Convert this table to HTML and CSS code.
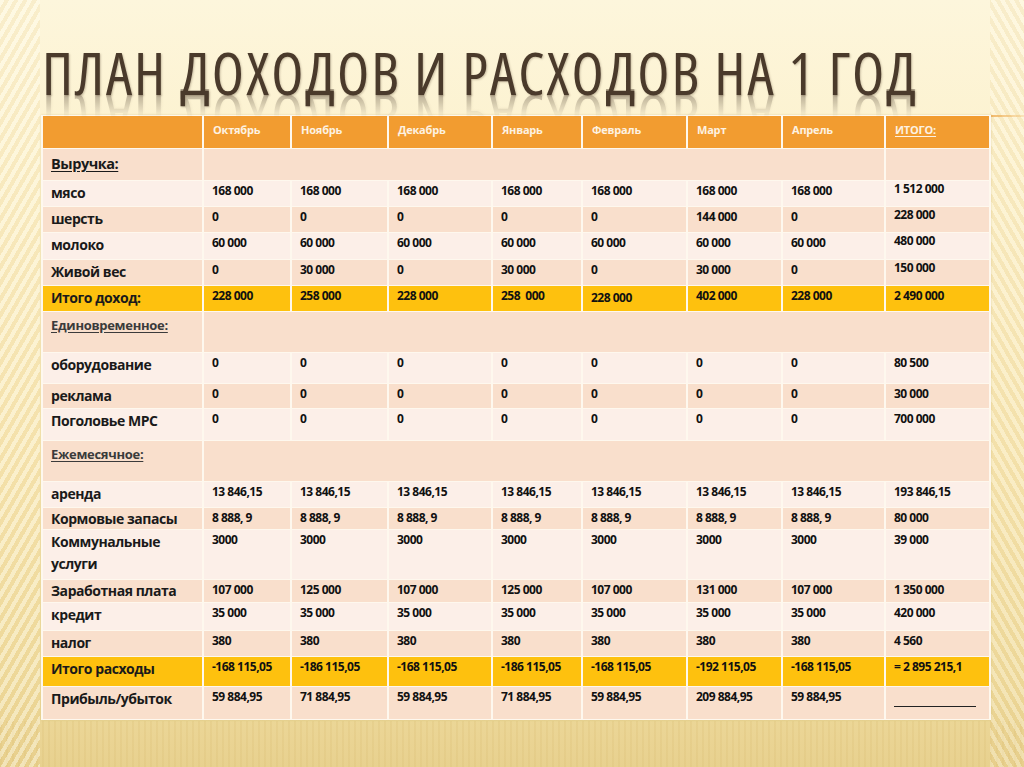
FILE: index.html
```html
<!DOCTYPE html>
<html lang="ru">
<head>
<meta charset="utf-8">
<title>План доходов и расходов на 1 год</title>
<link rel="stylesheet" href="styles.css">
</head>
<body>
<div class="slide">
  <h1 class="title"><span class="title-text">ПЛАН ДОХОДОВ И РАСХОДОВ НА 1 ГОД</span></h1>
  <div class="plan">
    <div class="row head">
      <div class="c"></div>
      <div class="c">Октябрь</div>
      <div class="c">Ноябрь</div>
      <div class="c">Декабрь</div>
      <div class="c">Январь</div>
      <div class="c">Февраль</div>
      <div class="c">Март</div>
      <div class="c">Апрель</div>
      <div class="c u">ИТОГО:</div>
    </div>
    <div class="row dark">
      <div class="c lbl big u">Выручка:</div>
      <div class="c span7"></div>
      <div class="c"></div>
    </div>
    <div class="row light">
      <div class="c lbl">мясо</div>
      <div class="c">168 000</div><div class="c">168 000</div><div class="c">168 000</div><div class="c">168 000</div><div class="c">168 000</div><div class="c">168 000</div><div class="c">168 000</div><div class="c tot">1 512 000</div>
    </div>
    <div class="row dark">
      <div class="c lbl">шерсть</div>
      <div class="c">0</div><div class="c">0</div><div class="c">0</div><div class="c">0</div><div class="c">0</div><div class="c">144 000</div><div class="c">0</div><div class="c tot">228 000</div>
    </div>
    <div class="row light">
      <div class="c lbl">молоко</div>
      <div class="c">60 000</div><div class="c">60 000</div><div class="c">60 000</div><div class="c">60 000</div><div class="c">60 000</div><div class="c">60 000</div><div class="c">60 000</div><div class="c tot">480 000</div>
    </div>
    <div class="row dark">
      <div class="c lbl">Живой вес</div>
      <div class="c">0</div><div class="c">30 000</div><div class="c">0</div><div class="c">30 000</div><div class="c">0</div><div class="c">30 000</div><div class="c">0</div><div class="c tot">150 000</div>
    </div>
    <div class="row gold">
      <div class="c lbl">Итого доход:</div>
      <div class="c">228 000</div><div class="c">258 000</div><div class="c">228 000</div><div class="c">258&nbsp; 000</div><div class="c low">228 000</div><div class="c">402 000</div><div class="c">228 000</div><div class="c">2 490 000</div>
    </div>
    <div class="row dark">
      <div class="c lbl sec u">Единовременное:</div>
      <div class="c span8"></div>
    </div>
    <div class="row light">
      <div class="c lbl">оборудование</div>
      <div class="c">0</div><div class="c">0</div><div class="c">0</div><div class="c">0</div><div class="c">0</div><div class="c">0</div><div class="c">0</div><div class="c">80 500</div>
    </div>
    <div class="row dark">
      <div class="c lbl">реклама</div>
      <div class="c">0</div><div class="c">0</div><div class="c">0</div><div class="c">0</div><div class="c">0</div><div class="c">0</div><div class="c">0</div><div class="c">30 000</div>
    </div>
    <div class="row light">
      <div class="c lbl">Поголовье МРС</div>
      <div class="c">0</div><div class="c">0</div><div class="c">0</div><div class="c">0</div><div class="c">0</div><div class="c">0</div><div class="c">0</div><div class="c">700 000</div>
    </div>
    <div class="row dark">
      <div class="c lbl sec u">Ежемесячное:</div>
      <div class="c span8"></div>
    </div>
    <div class="row light">
      <div class="c lbl">аренда</div>
      <div class="c">13 846,15</div><div class="c">13 846,15</div><div class="c">13 846,15</div><div class="c">13 846,15</div><div class="c">13 846,15</div><div class="c">13 846,15</div><div class="c">13 846,15</div><div class="c">193 846,15</div>
    </div>
    <div class="row dark">
      <div class="c lbl tight">Кормовые запасы</div>
      <div class="c">8 888, 9</div><div class="c">8 888, 9</div><div class="c">8 888, 9</div><div class="c">8 888, 9</div><div class="c">8 888, 9</div><div class="c">8 888, 9</div><div class="c">8 888, 9</div><div class="c">80 000</div>
    </div>
    <div class="row light">
      <div class="c lbl">Коммунальные услуги</div>
      <div class="c">3000</div><div class="c">3000</div><div class="c">3000</div><div class="c">3000</div><div class="c">3000</div><div class="c">3000</div><div class="c">3000</div><div class="c">39 000</div>
    </div>
    <div class="row dark">
      <div class="c lbl tight">Заработная плата</div>
      <div class="c">107 000</div><div class="c">125 000</div><div class="c">107 000</div><div class="c">125 000</div><div class="c">107 000</div><div class="c">131 000</div><div class="c">107 000</div><div class="c">1 350 000</div>
    </div>
    <div class="row light">
      <div class="c lbl">кредит</div>
      <div class="c">35 000</div><div class="c">35 000</div><div class="c">35 000</div><div class="c">35 000</div><div class="c">35 000</div><div class="c">35 000</div><div class="c">35 000</div><div class="c">420 000</div>
    </div>
    <div class="row dark">
      <div class="c lbl">налог</div>
      <div class="c">380</div><div class="c">380</div><div class="c">380</div><div class="c">380</div><div class="c">380</div><div class="c">380</div><div class="c">380</div><div class="c">4 560</div>
    </div>
    <div class="row gold">
      <div class="c lbl">Итого расходы</div>
      <div class="c">-168 115,05</div><div class="c">-186 115,05</div><div class="c">-168 115,05</div><div class="c">-186 115,05</div><div class="c">-168 115,05</div><div class="c">-192 115,05</div><div class="c">-168 115,05</div><div class="c">= 2 895 215,1</div>
    </div>
    <div class="row dark">
      <div class="c lbl">Прибыль/убыток</div>
      <div class="c">59 884,95</div><div class="c">71 884,95</div><div class="c">59 884,95</div><div class="c">71 884,95</div><div class="c">59 884,95</div><div class="c">209 884,95</div><div class="c">59 884,95</div><div class="c"><span class="dash"></span></div>
    </div>
  </div>
</div>
</body>
</html>
```

FILE: styles.css
```css
html, body {
  margin: 0;
  padding: 0;
}

body {
  width: 1024px;
  height: 767px;
  overflow: hidden;
}

.slide {
  width: 1024px;
  height: 767px;
  box-sizing: border-box;
  padding: 0 33px 0 41px;
  font-family: "Open Sans", "DejaVu Sans", sans-serif;
  background:
    linear-gradient(90deg, rgba(236, 160, 60, 0.7), rgba(236, 160, 60, 0.2)) right 115px / 33px 2px no-repeat,
    repeating-linear-gradient(120deg, rgba(255, 252, 236, 0.45) 0 4px, rgba(230, 200, 128, 0.18) 4px 8px) left top / 40px 100% no-repeat,
    repeating-linear-gradient(60deg, rgba(255, 250, 232, 0.35) 0 4px, rgba(226, 196, 124, 0.18) 4px 8px) right top / 34px 100% no-repeat,
    repeating-linear-gradient(90deg, rgba(214, 184, 108, 0.2) 0 2px, rgba(255, 255, 255, 0) 2px 6px) left bottom / 100% 46px no-repeat,
    linear-gradient(180deg, #fdf6dc 0%, #fcf1cd 22%, #f7e6b3 60%, #efdb9e 88%, #e8d18f 100%);
}

.title {
  margin: 0;
  height: 115px;
  box-sizing: border-box;
  padding: 44px 0 0 1px;
  font-weight: 400;
  font-size: 59px;
  line-height: 57px;
  white-space: nowrap;
}

.title-text {
  display: inline-block;
  color: #4a3a2b;
  font-stretch: condensed;
  letter-spacing: 2px;
  text-shadow: 1px 1px 2px rgba(60, 40, 20, 0.25);
  -webkit-box-reflect: below -12px linear-gradient(rgba(255, 255, 255, 0) 50%, rgba(255, 255, 255, 0.45));
}

.plan {
  display: grid;
  width: max-content;
  grid-template-columns: 159px 86px 95px 102px 88px 103px 93px 101px 103px;
  grid-template-rows: 32px 31px 25px 25px 26px 25px 25px 40px 30px 24px 31px 40px 25px 21px 49px 22px 27px 25px 29px 32px;
  gap: 1px 2px;
  padding: 1px 2px;
  background: #fef8ee;
  box-shadow: 0 0 2px rgba(200, 170, 100, 0.4);
}

.row {
  display: contents;
}

.c {
  padding: 2px 4px 0 8px;
  font-size: 12px;
  line-height: 16px;
  font-weight: 700;
  letter-spacing: -0.5px;
  color: #111;
  white-space: nowrap;
  overflow: hidden;
}

.head .c {
  background: #f29c30;
  color: #fdf2e2;
  font-size: 11px;
  letter-spacing: -0.2px;
  padding-top: 6px;
  padding-left: 9px;
}

.dark .c {
  background: #f9dfcc;
}

.light .c {
  background: #fcefe8;
}

.gold .c {
  background: #fec10e;
}

.span7 {
  grid-column: span 7;
}

.span8 {
  grid-column: span 8;
}

.u {
  text-decoration: underline;
  text-underline-offset: 2px;
}

.c.tot {
  padding-top: 0;
}

.c.lbl {
  font-size: 14px;
  line-height: 22px;
  padding-top: 1px;
  letter-spacing: -0.45px;
  color: #1a1a1a;
  white-space: normal;
}

.c.tight {
  line-height: 20px;
}

.c.big {
  padding-top: 4px;
  font-size: 14.5px;
}

.c.sec {
  font-size: 13px;
  color: #3b3b3b;
  padding-top: 2px;
  letter-spacing: -0.3px;
}

.c.low {
  padding-top: 4px;
}

.dash {
  display: block;
  width: 82px;
  margin-top: 17px;
  border-bottom: 1px solid #222;
}
```
